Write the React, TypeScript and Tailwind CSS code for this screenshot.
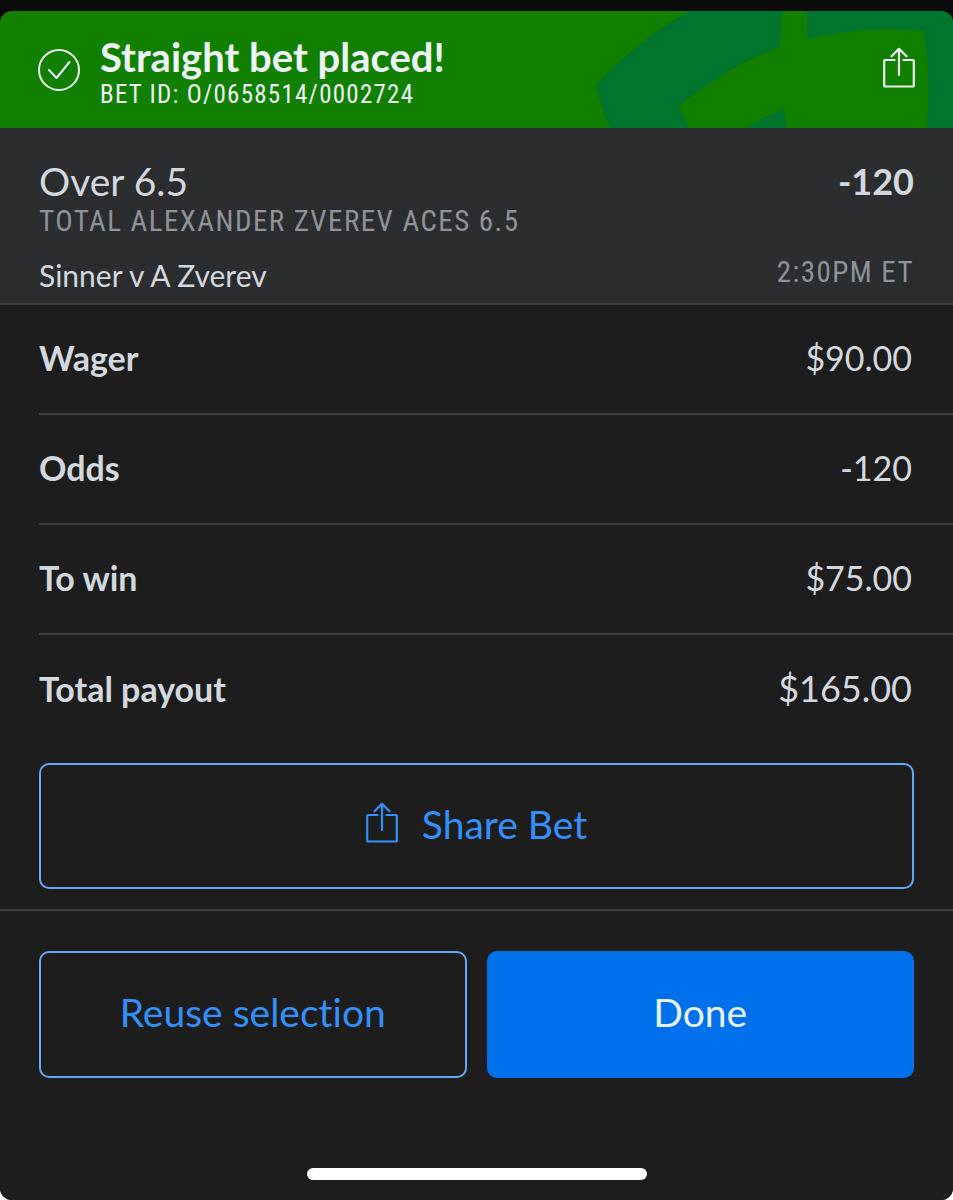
type IconProps = {
  className?: string;
};

type SlipRow = {
  label: string;
  value: string;
  large?: boolean;
};

const rows: SlipRow[] = [
  { label: 'Wager', value: '$90.00' },
  { label: 'Odds', value: '-120' },
  { label: 'To win', value: '$75.00' },
  { label: 'Total payout', value: '$165.00', large: true },
];

const ShareIcon = ({ className }: IconProps) => (
  <svg
    viewBox="0 0 32 41"
    fill="none"
    stroke="currentColor"
    strokeWidth="2.2"
    strokeLinecap="round"
    strokeLinejoin="round"
    className={className}
    aria-hidden="true"
  >
    <path d="M11.5 13H2a.8.8 0 0 0-.8.8v24.9a.8.8 0 0 0 .8.8h28a.8.8 0 0 0 .8-.8V13.8a.8.8 0 0 0-.8-.8h-9.5" />
    <path d="M16 28V2M8.5 9.3 16 1.8l7.5 7.5" />
  </svg>
);

const CheckIcon = ({ className }: IconProps) => (
  <svg
    viewBox="0 0 42 42"
    fill="none"
    stroke="currentColor"
    strokeWidth="2"
    strokeLinecap="round"
    strokeLinejoin="round"
    className={className}
    aria-hidden="true"
  >
    <circle cx="21" cy="21" r="20" />
    <path d="m11 21 7.5 8 13-16" />
  </svg>
);

const ShieldArt = () => (
  <svg
    viewBox="0 0 360 117"
    preserveAspectRatio="xMaxYMin slice"
    fill="#00752d"
    className="absolute top-0 right-0 h-full w-[360px]"
    aria-hidden="true"
  >
    <path d="M96 0H189L187 36Q137 54 86 95Q91 107 96 117H17Q8 97 3 74Q45 29 96 0Z" />
    <path d="M214 0H360V117H334Q338 66 331 20Q271 14 214 28Z" />
    <path d="M153 117Q172 105 191 98L194 117Z" />
  </svg>
);

export default function App() {
  return (
    <div className="min-h-screen bg-white font-['Lato',sans-serif] text-[#d3d8df] [font-variant-ligatures:no-common-ligatures]">
      <div className="flex min-h-screen flex-col rounded-b-xl bg-[#0a0a0a] pt-[11px]">
        <main className="flex flex-1 flex-col overflow-hidden rounded-xl bg-[#1d1d1d]">
          <header className="relative flex h-[117px] items-center overflow-hidden bg-[#118000] px-[38px] text-[#eef3f8]">
            <ShieldArt />
            <CheckIcon className="size-[42px] shrink-0" />
            <div className="relative ml-5 flex-1 pt-1">
              <h1 className="text-[40px] leading-[46px] font-bold">
                Straight bet placed!
              </h1>
              <p className="font-['Roboto_Condensed','Liberation_Sans_Narrow',sans-serif] text-[25px] leading-[30px] tracking-wider">
                BET ID: O/0658514/0002724
              </p>
            </div>
            <button type="button" aria-label="Share" className="relative mb-1">
              <ShareIcon className="h-[41px] w-8" />
            </button>
          </header>

          <section className="border-b-2 border-[#3f4143] bg-[#2c2d2f] px-[39px] pt-[31px] pb-2">
            <div className="flex items-center justify-between">
              <h2 className="text-[39px] leading-[44px]">Over 6.5</h2>
              <span className="text-4xl leading-[44px] font-bold">-120</span>
            </div>
            <p className="font-['Roboto_Condensed','Liberation_Sans_Narrow',sans-serif] text-[29px] leading-9 tracking-wider text-[#8f9499]">
              TOTAL ALEXANDER ZVEREV ACES 6.5
            </p>
            <div className="mt-[18px] flex items-start justify-between pb-[2px]">
              <p className="text-[30px] leading-9">Sinner v A Zverev</p>
              <p className="font-['Roboto_Condensed','Liberation_Sans_Narrow',sans-serif] text-[29px] leading-[30px] tracking-wider text-[#8f9499]">
                2:30PM ET
              </p>
            </div>
          </section>

          <dl className="pl-[39px]">
            {rows.map(({ label, value, large }) => (
              <div
                key={label}
                className="flex h-[110px] items-center justify-between border-b-2 border-[#3c3c3e] pr-[41px] pb-1 last:border-b-0"
              >
                <dt className="text-[34px] font-bold">{label}</dt>
                <dd className={large ? 'text-4xl' : 'text-[34px]'}>{value}</dd>
              </div>
            ))}
          </dl>

          <div className="border-b-2 border-[#3c3c3e] px-[39px] pt-[18px] pb-5">
            <button
              type="button"
              className="flex h-[126px] w-full items-center justify-center gap-6 rounded-[10px] border-2 border-[#63a8fb] pb-1 text-[39px] text-[#3390fa]"
            >
              <ShareIcon className="mb-1 h-[41px] w-8" />
              Share Bet
            </button>
          </div>

          <footer className="flex flex-1 flex-col px-[39px] pt-10 pb-5">
            <div className="grid grid-cols-2 gap-5 text-[39px]">
              <button
                type="button"
                className="h-[127px] rounded-[10px] border-2 border-[#63a8fb] pb-1 text-[#3390fa]"
              >
                Reuse selection
              </button>
              <button
                type="button"
                className="h-[127px] rounded-[10px] bg-[#0070eb] pb-1 text-[#e8f1fc]"
              >
                Done
              </button>
            </div>
            <div className="mx-auto mt-auto h-3 w-[340px] rounded-full bg-white" />
          </footer>
        </main>
      </div>
    </div>
  );
}
